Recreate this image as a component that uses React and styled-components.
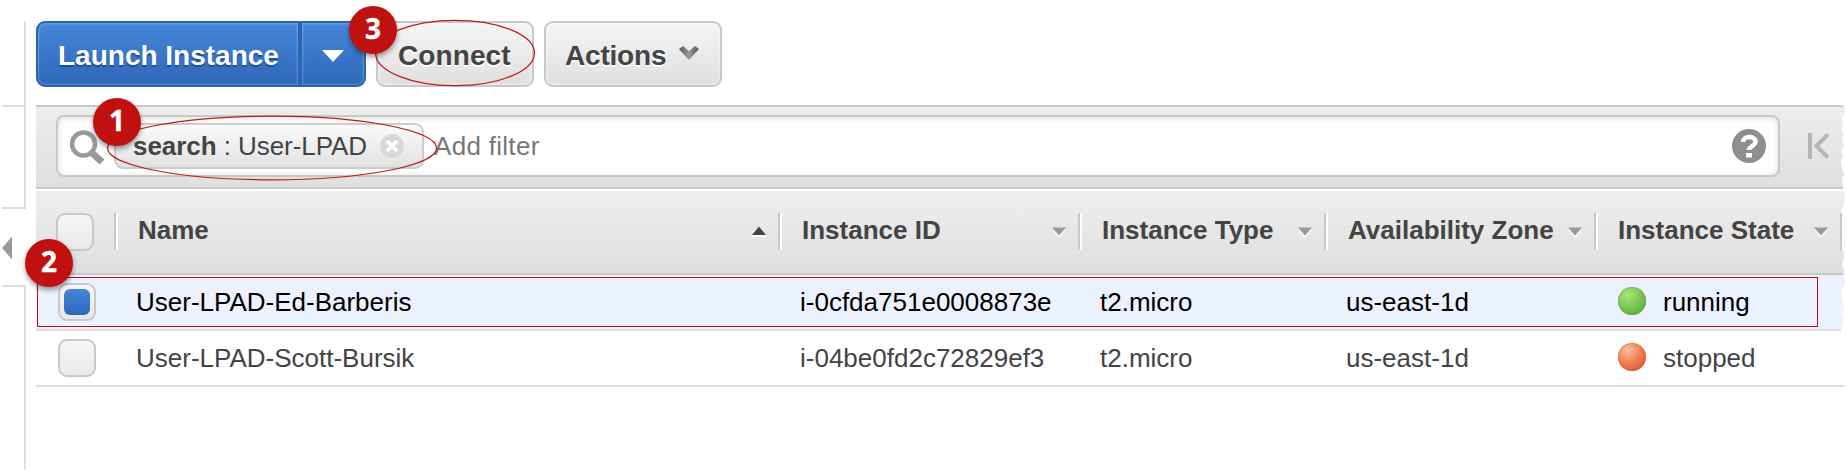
import React from "react";
import styled, { createGlobalStyle, css } from "styled-components";

const Global = createGlobalStyle`
  * { box-sizing: border-box; }
  body { margin: 0; background: #fff; font-family: "Liberation Sans", Arial, sans-serif; }
`;

const Page = styled.div`
  position: relative;
  display: flex;
  width: 1847px;
  height: 472px;
  overflow: hidden;
  background: #fff;
  color: #444;
`;

const Rail = styled.aside`
  display: flex;
  flex-direction: column;
  width: 26px;
  height: 469px;
  padding: 21px 0 0 2px;
  flex: none;
`;
const RailPart = styled.div`
  height: ${(p) => p.$h}px;
  flex: none;
  border-right: 2px solid #ddd;
  border-bottom: ${(p) => (p.$bottom ? "2px solid #ddd" : "0")};
`;
const RailHandle = styled.div`
  display: flex;
  align-items: center;
  height: 76px;
  flex: none;
  padding-top: 1px;
`;
const RailTail = styled.div`
  flex: 1;
  border-top: 2px solid #ddd;
  border-right: 2px solid #ddd;
`;

const Main = styled.main`
  width: 1809px;
  margin-left: 10px;
  flex: none;
`;

const Toolbar = styled.div`
  display: flex;
  gap: 10px;
  height: 105px;
  padding-top: 21px;
`;
const buttonText = css`
  font: bold 28px/58px "Liberation Sans", Arial, sans-serif;
  letter-spacing: ${(p) => p.$spacing || 0}px;
`;
const Button = styled.button`
  ${buttonText}
  display: flex;
  align-items: center;
  width: ${(p) => p.$w}px;
  height: 66px;
  padding: 4px 0 0 ${(p) => p.$pad}px;
  border: 2px solid #c8c8c8;
  border-radius: 9px;
  background: linear-gradient(#f5f5f5, #dfdfdf);
  box-shadow: inset 0 0 3px 1px rgba(255, 255, 255, 0.55);
  color: #444;
  text-shadow: 0 2px 0 #fff;
`;
const SplitButton = styled.div`
  display: flex;
  width: 330px;
  height: 66px;
  border: 2px solid #2a65b5;
  border-radius: 9px;
  background: #2a65b5;
  overflow: hidden;
  gap: 4px;
`;
const SplitPart = styled.button`
  ${buttonText}
  display: flex;
  align-items: center;
  width: ${(p) => p.$w}px;
  height: 62px;
  padding: 4px 0 0 ${(p) => p.$pad}px;
  border: 0;
  border-radius: ${(p) => p.$radius};
  background: linear-gradient(#4787d8, #2d67b8);
  box-shadow: inset 0 0 2px 1px rgba(255, 255, 255, 0.25);
  color: #fff;
  text-shadow: 0 2px 1px #1f4f96;
`;
const Chevron = styled.svg`
  margin: -5px 0 0 13px;
`;

const FilterBar = styled.div`
  display: flex;
  align-items: flex-start;
  height: 84px;
  padding: 8px 0 0 20px;
  border-top: 2px solid #c8c8c8;
  border-bottom: 2px solid #c8c8c8;
  background: linear-gradient(#ededed, #dfdfdf);
`;
const SearchBox = styled.div`
  display: flex;
  align-items: center;
  width: 1724px;
  height: 62px;
  padding: 0 12px;
  border: 2px solid #c8c8c8;
  border-radius: 8px;
  background: #fff;
  box-shadow: inset 0 1px 6px rgba(0, 0, 0, 0.14);
`;
const Chip = styled.div`
  display: flex;
  align-items: center;
  width: 310px;
  height: 46px;
  margin-left: 8px;
  padding: 0 18px 0 17px;
  border: 2px solid #ccc;
  border-radius: 9px;
  background: linear-gradient(#fafafa, #e2e2e2);
  font-size: 26px;
  line-height: 42px;
  letter-spacing: -0.06px;
  white-space: pre;
`;
const ChipClose = styled.svg`
  margin-left: auto;
`;
const Placeholder = styled.span`
  flex: 1;
  padding-left: 10px;
  color: #777;
  font-size: 26px;
  letter-spacing: 0.3px;
`;
const PageFirst = styled.svg`
  margin: 18px 0 0 28px;
`;

const columns = "80px 664px 300px 246px 270px 246px 3px";
const HeaderRow = styled.div`
  display: grid;
  grid-template-columns: ${columns};
  height: 86px;
  border-top: 2px solid #fff;
  border-bottom: 2px solid #c8c8c8;
  background: linear-gradient(#eee, #dfdfdf);
  background-clip: padding-box;
  font-size: 26px;
  font-weight: bold;
`;
const HeadCheck = styled.div`
  padding: 22px 0 0 20px;
`;
const HeadCell = styled.div`
  display: flex;
  align-items: center;
  justify-content: space-between;
  width: 100%;
  height: 37px;
  margin: 22px 0 0 -2px;
  padding: 0 11px 0 22px;
  border-left: 2px solid #c8c8c8;
  box-shadow: inset 2px 0 0 #fff;
  line-height: 34px;
  white-space: nowrap;
`;
const HeadEnd = styled.div`
  width: 4px;
  height: 37px;
  margin: 22px 0 0 -2px;
  border-left: 2px solid #c8c8c8;
  background: #fff;
`;
const HeadLabel = styled.span`
  padding-bottom: 3px;
`;

const Row = styled.div`
  display: grid;
  grid-template-columns: ${columns};
  height: 56px;
  border-bottom: 2px solid #ddd;
  background: ${(p) => (p.$selected ? "#ebf2fd" : "#fff")};
  color: ${(p) => (p.$selected ? "#000" : "#444")};
  font-size: 26px;
  line-height: 55px;
`;
const RowCheck = styled.div`
  padding: 8px 0 0 22px;
`;
const Cell = styled.div`
  display: flex;
  height: 54px;
  padding-left: ${(p) => p.$pad || 20}px;
  white-space: nowrap;
`;
const Checkbox = styled.div`
  display: flex;
  width: 38px;
  height: 38px;
  padding: 4px;
  border: 2px solid #c8c8c8;
  border-radius: 9px;
  background: linear-gradient(#f6f6f6, #e9e9e9);
`;
const CheckFill = styled.div`
  flex: 1;
  border-radius: 6px;
  background: linear-gradient(#4686d7, #2d67b8);
`;
const StateDot = styled.span`
  width: 28px;
  height: 28px;
  margin: 12px 17px 0 0;
  border-radius: 50%;
  background: ${(p) =>
    p.$state === "running"
      ? "radial-gradient(circle at 35% 28%, #a9e878, #7ac753 48%, #4a9a2c)"
      : "radial-gradient(circle at 35% 25%, #f9c19a, #f07a50 50%, #cf4627)"};
  box-shadow: inset 0 0 2px ${(p) => (p.$state === "running" ? "#4c982f" : "#cf5030")};
`;

const Overlay = styled.svg`
  position: absolute;
  inset: 0;
  pointer-events: none;
`;
const RowHighlight = styled.div`
  position: absolute;
  left: 37px;
  top: 277px;
  width: 1781px;
  height: 50px;
  border: 1px solid #b81212;
`;
const Badge = styled.div`
  position: absolute;
  left: ${(p) => p.$x}px;
  top: ${(p) => p.$y}px;
  width: 48px;
  height: 48px;
  border-radius: 50%;
  background: #c01010;
  box-shadow: 0 3px 5px rgba(0, 0, 0, 0.4);
  color: #fff;
  font: 700 28px/45px "Open Sans", "Noto Sans", sans-serif;
  -webkit-text-stroke: 0.4px #fff;
  text-align: center;
`;

const SortArrow = ({ up }) => (
  <svg width="16" height="12" viewBox="0 0 16 12">
    {up ? (
      <>
        <path d="M1 9h14v2H1z" fill="#fff" opacity=".7" />
        <path d="M8 0.5L15 9H1z" fill="#444" />
      </>
    ) : (
      <>
        <path d="M1 4h14L8 12z" fill="#fff" opacity=".8" />
        <path d="M1 1.500h14L8 9.500z" fill="#999" />
      </>
    )}
  </svg>
);

const heads = [
  { label: "Name", up: true },
  { label: "Instance ID" },
  { label: "Instance Type" },
  { label: "Availability Zone" },
  { label: "Instance State" },
];

const rows = [
  { name: "User-LPAD-Ed-Barberis", id: "i-0cfda751e0008873e", type: "t2.micro", zone: "us-east-1d", state: "running", selected: true },
  { name: "User-LPAD-Scott-Bursik", id: "i-04be0fd2c72829ef3", type: "t2.micro", zone: "us-east-1d", state: "stopped" },
];

export default function App() {
  return (
    <Page>
      <Global />
      <Rail>
        <RailPart $h={86} $bottom />
        <RailPart $h={102} $bottom />
        <RailHandle>
          <svg width="11" height="24" viewBox="0 0 11 24">
            <path d="M10 0.500V23.500L0 12z" fill="#999" />
          </svg>
        </RailHandle>
        <RailTail />
      </Rail>
      <Main>
        <Toolbar>
          <SplitButton>
            <SplitPart $w={260} $pad={20} $radius="7px 0 0 7px">Launch Instance</SplitPart>
            <SplitPart $w={62} $pad={20} $radius="0 7px 7px 0" aria-label="More launch options">
              <svg width="22" height="14" viewBox="0 0 22 14">
                <path d="M0 1h22L11 13z" fill="#fff" />
              </svg>
            </SplitPart>
          </SplitButton>
          <Button $w={158} $pad={20} $spacing={0.1}>Connect</Button>
          <Button $w={178} $pad={19} $spacing={-0.2}>
            Actions
            <Chevron width="20" height="15" viewBox="0 0 20 15">
              <defs>
                <linearGradient id="chevronShade">
                  <stop offset="0" stopColor="#555" />
                  <stop offset=".5" stopColor="#999" />
                  <stop offset="1" stopColor="#555" />
                </linearGradient>
              </defs>
              <path d="M0 3L4 0L10 5L16 0L20 3L10 14z" fill="url(#chevronShade)" />
            </Chevron>
          </Button>
        </Toolbar>
        <FilterBar>
          <SearchBox>
            <svg width="36" height="36" viewBox="0 0 36 36">
              <circle cx="13.500" cy="16" r="11.500" fill="none" stroke="#999" strokeWidth="4.500" />
              <path d="M21.500 24.500L32 34" stroke="#999" strokeWidth="7" />
            </svg>
            <Chip>
              <b>search</b> : User-LPAD
              <ChipClose width="24" height="24" viewBox="0 0 24 24">
                <circle cx="12" cy="12" r="12" fill="#d9d9d9" />
                <path d="M7 7L17 17M17 7L7 17" stroke="#fff" strokeWidth="3.500" />
              </ChipClose>
            </Chip>
            <Placeholder>Add filter</Placeholder>
            <svg width="34" height="34" viewBox="0 0 34 34">
              <circle cx="17" cy="17" r="17" fill="#8e8e8e" />
              <path d="M11 13c0-6.500 12.500-6.500 12.500-.5 0 4.500-6.500 4.500-6.500 8.500" fill="none" stroke="#fff" strokeWidth="4.500" />
              <path d="M14 24h6v4.500h-6z" fill="#fff" />
            </svg>
          </SearchBox>
          <PageFirst width="21" height="26" viewBox="0 0 21 26">
            <path d="M2 0V26M20 1.500L8.500 13L20 24.500" fill="none" stroke="#b5b5b5" strokeWidth="4" />
          </PageFirst>
        </FilterBar>
        <HeaderRow>
          <HeadCheck><Checkbox /></HeadCheck>
          {heads.map((h) => (
            <HeadCell key={h.label}>
              <HeadLabel>{h.label}</HeadLabel>
              <SortArrow up={h.up} />
            </HeadCell>
          ))}
          <HeadEnd />
        </HeaderRow>
        {rows.map((r) => (
          <Row key={r.id} $selected={r.selected}>
            <RowCheck>
              <Checkbox>{r.selected && <CheckFill />}</Checkbox>
            </RowCheck>
            <Cell>{r.name}</Cell>
            <Cell>{r.id}</Cell>
            <Cell>{r.type}</Cell>
            <Cell>{r.zone}</Cell>
            <Cell $pad={22}>
              <StateDot $state={r.state} />
              {r.state}
            </Cell>
          </Row>
        ))}
      </Main>
      <RowHighlight />
      <Overlay width="1847" height="472" viewBox="0 0 1847 472">
        <g fill="none" stroke="#c01a1e" strokeWidth="1.200">
          <ellipse cx="272" cy="148" rx="164.500" ry="31.800" />
          <ellipse cx="455" cy="53" rx="79.500" ry="32.700" />
        </g>
        <path
          d="M1847 100H1844L1842 105L1845 108L1844 114L1842 118L1843 124L1841 128L1843 134L1842 140L1844 145L1841 150L1843 156L1841 162L1842 168L1844 174L1842 180L1843 188L1845 195L1844 204L1841 210L1843 216L1845 224L1843 232L1845 244L1843 250L1844 258L1842 264L1844 270L1843 276L1845 280L1843 286L1841 294L1842 300L1844 307L1842 313L1844 320L1843 325L1841 331H1842L1845 340V384L1844 388H1847z"
          fill="#fff"
        />
      </Overlay>
      <Badge $x={93} $y={98}>1</Badge>
      <Badge $x={25} $y={239}>2</Badge>
      <Badge $x={349} $y={6}>3</Badge>
    </Page>
  );
}
